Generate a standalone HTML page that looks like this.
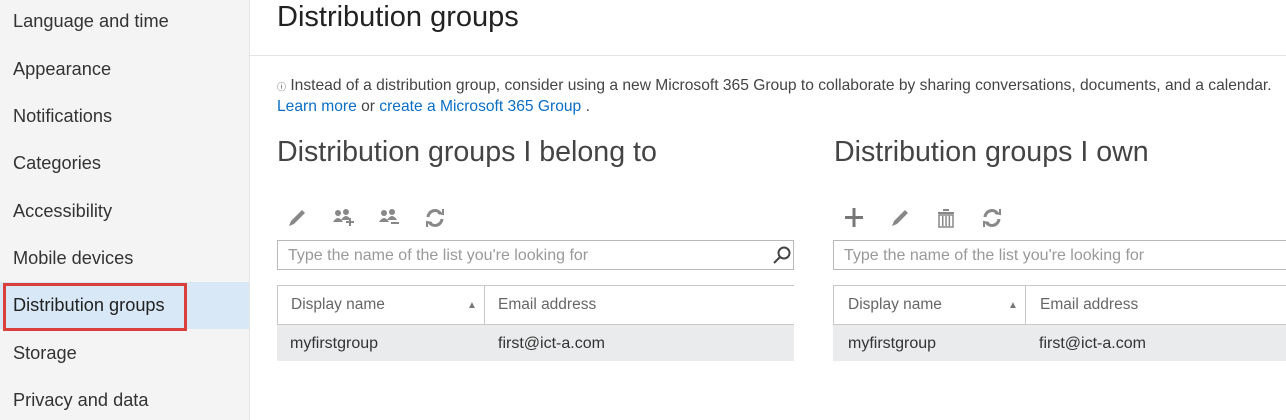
<!DOCTYPE html><html><head><style>
body{margin:0;width:1286px;height:420px;overflow:hidden;background:#fff;font-family:"Liberation Sans",sans-serif;position:relative;color:#333}
.side{position:absolute;left:0;top:0;width:249px;height:420px;background:#f4f4f4;border-right:1px solid #e6e6e6}
.side div{position:absolute;left:13px;font-size:18.2px;color:#333}
.a{position:absolute}
.h2{font-size:28.6px;color:#444;font-weight:300}
.search{position:absolute;height:30px;border:1px solid #b8b8b8;font-size:16px;color:#999;line-height:30px;padding-left:10px;box-sizing:border-box}
.th{position:absolute;height:40px;border:1px solid #c8c8c8;border-right:none;box-sizing:border-box;font-size:15.5px;color:#666}
.th span{position:absolute;top:10px}
.tr{position:absolute;height:36px;background:#eaebec;font-size:16px;color:#333}
.tr span{position:absolute;top:10px}
a{color:#0a6ec4;text-decoration:none}
svg{position:absolute}
</style></head><body>
<div class="side">
<div style="top:11px">Language and time</div>
<div style="top:59px">Appearance</div>
<div style="top:106px">Notifications</div>
<div style="top:153px">Categories</div>
<div style="top:201px">Accessibility</div>
<div style="top:248px">Mobile devices</div>
<div style="top:282px;left:0;width:249px;height:47px;background:#d8e8f6"></div>
<div style="top:283px;left:3px;width:178px;height:42px;border:3px solid #d9403b"></div>
<div style="top:295px;color:#222">Distribution groups</div>
<div style="top:343px">Storage</div>
<div style="top:390px">Privacy and data</div>
</div>
<div class="a" style="left:277px;top:1px;font-size:29px;color:#222">Distribution groups</div>
<div class="a" style="left:250px;top:55px;width:1036px;height:1px;background:#e4e4e4"></div>
<div class="a" style="left:277px;top:77px;font-size:15.6px;color:#444;white-space:nowrap"><span style="font-size:9px">ⓘ</span> Instead of a distribution group, consider using a new Microsoft 365 Group to collaborate by sharing conversations, documents, and a calendar.</div>
<div class="a" style="left:277px;top:98px;font-size:15.6px;color:#444"><a>Learn more</a> or <a>create a Microsoft 365 Group</a> .</div>
<div class="a h2" style="left:277px;top:136px">Distribution groups I belong to</div>
<div class="a h2" style="left:834px;top:136px">Distribution groups I own</div>
<svg style="left:286px;top:207px" width="22" height="22"><path d="M3 19 L5 14 L16 3 L19 6 L8 17 Z" fill="#888"/></svg>
<svg style="left:332px;top:207px" width="24" height="22" fill="#888"><circle cx="6" cy="6" r="3"/><path d="M1 15 q5-8 10 0z"/><circle cx="14" cy="5" r="3"/><path d="M9 13 q5-8 10 0z"/><rect x="14" y="14" width="8" height="2"/><rect x="17" y="11" width="2" height="8"/></svg>
<svg style="left:378px;top:207px" width="24" height="22" fill="#888"><circle cx="6" cy="6" r="3"/><path d="M1 15 q5-8 10 0z"/><circle cx="14" cy="5" r="3"/><path d="M9 13 q5-8 10 0z"/><rect x="13" y="15" width="8" height="2"/></svg>
<svg style="left:424px;top:207px" width="22" height="22" fill="none" stroke="#888" stroke-width="3"><path d="M4 10 a7 7 0 0 1 13-3"/><path d="M18 12 a7 7 0 0 1-13 3"/><path d="M14 6 l5 1 0-5" stroke-width="2"/><path d="M8 16 l-5-1 0 5" stroke-width="2"/></svg>
<svg style="left:843px;top:207px" width="22" height="22" fill="#777"><rect x="2" y="9" width="18" height="3"/><rect x="9.5" y="1" width="3" height="19"/></svg>
<svg style="left:889px;top:207px" width="22" height="22"><path d="M3 19 L5 14 L16 3 L19 6 L8 17 Z" fill="#888"/></svg>
<svg style="left:935px;top:207px" width="22" height="22" fill="#888"><rect x="3" y="5" width="16" height="2"/><rect x="8" y="2" width="6" height="2"/><rect x="4" y="8" width="14" height="12" fill="none" stroke="#888" stroke-width="1.5"/><rect x="7" y="9" width="1.5" height="10"/><rect x="10.3" y="9" width="1.5" height="10"/><rect x="13.6" y="9" width="1.5" height="10"/></svg>
<svg style="left:981px;top:207px" width="22" height="22" fill="none" stroke="#888" stroke-width="3"><path d="M4 10 a7 7 0 0 1 13-3"/><path d="M18 12 a7 7 0 0 1-13 3"/><path d="M14 6 l5 1 0-5" stroke-width="2"/><path d="M8 16 l-5-1 0 5" stroke-width="2"/></svg>
<div class="search" style="left:277px;top:240px;width:517px">Type the name of the list you're looking for</div>
<svg style="left:772px;top:245px" width="20" height="20" fill="none" stroke="#444" stroke-width="2"><circle cx="12" cy="8" r="5.5"/><path d="M8 12 L2 18"/></svg>
<div class="search" style="left:833px;top:240px;width:460px">Type the name of the list you're looking for</div>
<div class="th" style="left:277px;top:285px;width:517px"><span style="left:13px">Display name</span><span style="left:189px;top:14px;font-size:10px;color:#777">▲</span><div class="a" style="left:206px;top:0;width:1px;height:38px;background:#c8c8c8"></div><span style="left:220px">Email address</span></div>
<div class="tr" style="left:277px;top:325px;width:517px"><span style="left:13px">myfirstgroup</span><span style="left:221px">first@ict-a.com</span></div>
<div class="th" style="left:833px;top:285px;width:453px"><span style="left:14px">Display name</span><span style="left:174px;top:14px;font-size:10px;color:#777">▲</span><div class="a" style="left:191px;top:0;width:1px;height:38px;background:#c8c8c8"></div><span style="left:206px">Email address</span></div>
<div class="tr" style="left:833px;top:325px;width:453px"><span style="left:15px">myfirstgroup</span><span style="left:206px">first@ict-a.com</span></div>
</body></html>
